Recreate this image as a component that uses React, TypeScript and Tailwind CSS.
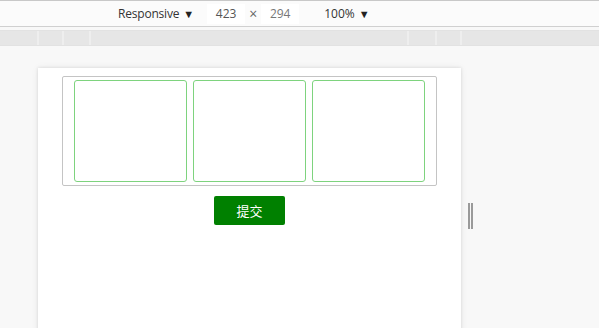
import React from "react";

function Ruler() {
  const Sep = () => <div className="w-[2px] h-full bg-[#fafafa] border-x border-[#eeeeee]" />;
  return (
    <div className="h-[16px] mt-[3px] bg-[#e6e6e6] flex border-y border-[#e2e2e2]">
      <div className="w-[37px]" />
      <Sep />
      <div className="w-[23px]" />
      <Sep />
      <div className="w-[25px]" />
      <Sep />
      <div className="w-[316px]" />
      <Sep />
      <div className="w-[26px]" />
      <Sep />
      <div className="w-[23px]" />
      <Sep />
      <div className="flex-1" />
    </div>
  );
}

export default function App() {
  return (
    <div
      className="w-[599px] h-[328px] overflow-hidden bg-[#f8f8f8] text-[#333]"
      style={{ fontFamily: '"Open Sans", "Liberation Sans", sans-serif' }}
    >
      <div className="h-[27px] bg-[#fbfbfb] border-t border-[#c8c8c8] border-b border-b-[#d0d0d0] flex items-center text-[12px] leading-none">
        <div className="w-[118px]" />
        <span className="tracking-[-0.2px]">Responsive</span>
        <span className="ml-[4px] text-[11px] text-[#222]">▼</span>
        <div className="ml-[13px] w-[38px] h-[20px] bg-white flex items-center justify-center text-[#555]">423</div>
        <span className="mx-[4px] text-[#666] text-[14px]">×</span>
        <div className="w-[38px] h-[20px] bg-white flex items-center justify-center text-[#777]">294</div>
        <span className="ml-[25px]">100%</span>
        <span className="ml-[4px] text-[11px] text-[#222]">▼</span>
      </div>
      <Ruler />
      <div className="pl-[38px] pt-[22px] flex items-start">
        <div className="w-[423px] h-[300px] bg-white shadow-[0_0_3px_rgba(0,0,0,0.12),0_0_8px_rgba(0,0,0,0.06)] pl-[24px] pt-[8px]">
          <div className="w-[375px] border border-[#c4c4c4] rounded-[2px] px-[11px] py-[3px] flex gap-[6px]">
            <div className="w-[113px] h-[102px] border border-[#7ed37e] rounded-[3px]" />
            <div className="w-[113px] h-[102px] border border-[#7ed37e] rounded-[3px]" />
            <div className="w-[113px] h-[102px] border border-[#7ed37e] rounded-[3px]" />
          </div>
          <div className="w-[375px] flex justify-center mt-[10px]">
            <button
              className="w-[71px] h-[29px] bg-[#008000] rounded-[2px] text-white text-[13px] flex items-center justify-center"
              style={{ fontFamily: '"Noto Sans CJK SC", sans-serif' }}
            >
              提交
            </button>
          </div>
        </div>
        <div className="ml-[7px] mt-[135px] flex gap-[1px]">
          <div className="w-[2px] h-[26px] bg-[#9a9a9a]" />
          <div className="w-[2px] h-[26px] bg-[#9a9a9a]" />
        </div>
      </div>
    </div>
  );
}
